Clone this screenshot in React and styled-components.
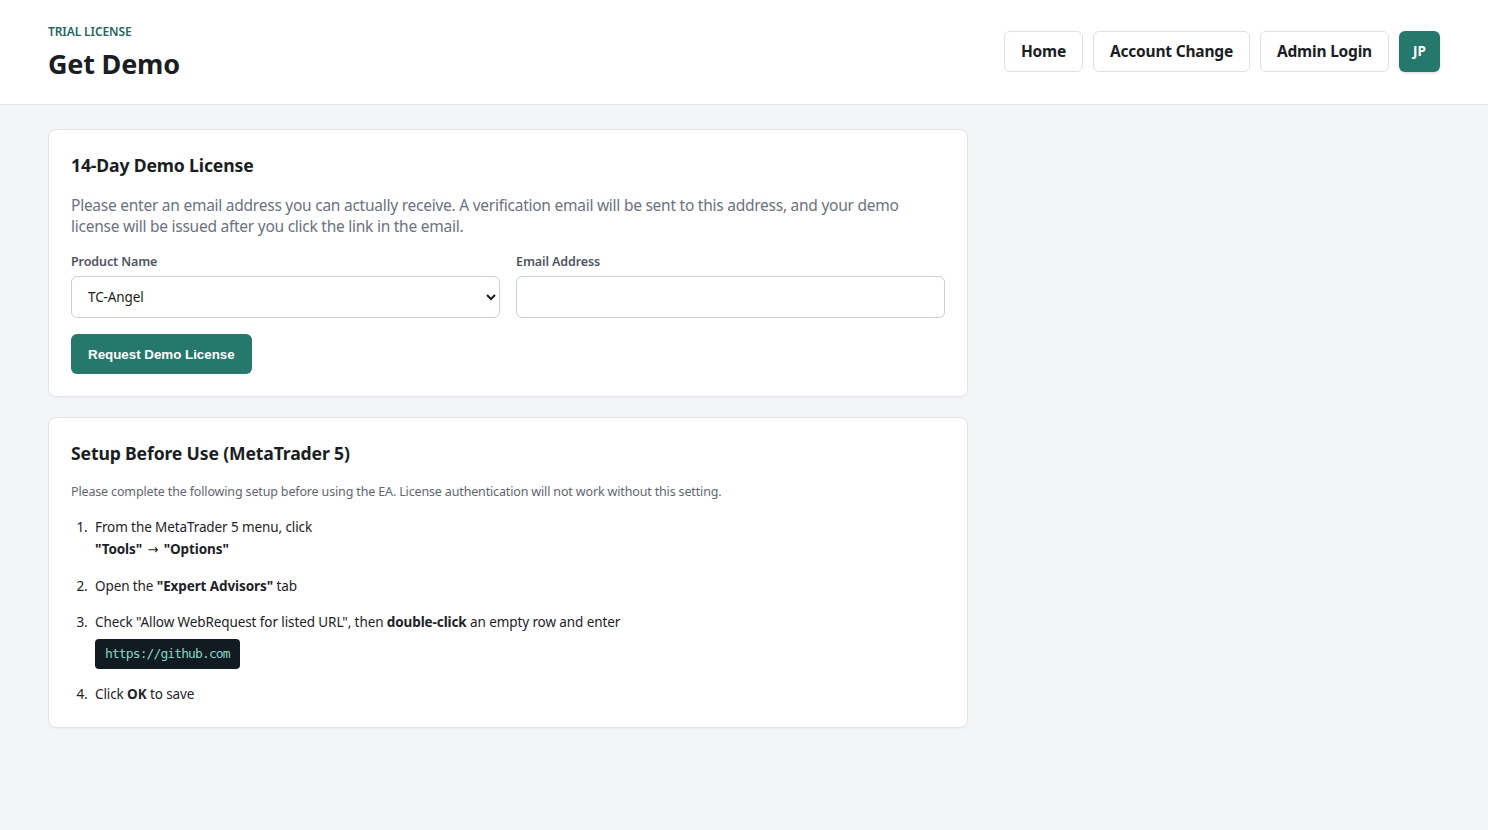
import React from "react";
import styled, { createGlobalStyle } from "styled-components";

const Global = createGlobalStyle`
  * { box-sizing: border-box; }
  html, body { margin: 0; padding: 0; }
  body {
    background: #f4f5f7;
    font-family: "Noto Sans", "Open Sans", sans-serif;
    color: #1c2024;
    min-height: 830px;
  }
`;

const Header = styled.header`
  height: 105px;
  background: #ffffff;
  border-bottom: 1px solid #e3e6ea;
  padding: 0 48px;
  display: flex;
  align-items: center;
  justify-content: space-between;
`;

const TitleBlock = styled.div`
  display: flex;
  flex-direction: column;
  gap: 6px;
  margin-top: 2px;
`;

const Eyebrow = styled.div`
  font-size: 12px;
  font-weight: 600;
  color: #22665f;
  letter-spacing: -0.1px;
  line-height: 16px;
`;

const PageTitle = styled.h1`
  margin: 0;
  font-size: 27px;
  font-weight: 700;
  line-height: 36px;
  color: #1a1e23;
  letter-spacing: -0.2px;
`;

const Nav = styled.nav`
  display: flex;
  align-items: center;
  gap: 10px;
  margin-top: -2px;
`;

const NavButton = styled.button`
  height: 41px;
  padding: 0 16px;
  background: #ffffff;
  border: 1px solid #dde1e6;
  border-radius: 6px;
  font-family: "Noto Sans", sans-serif;
  font-size: 15.5px;
  font-weight: 700;
  color: #1a1e23;
  letter-spacing: -0.2px;
  cursor: pointer;
`;

const Avatar = styled.div`
  width: 41px;
  height: 41px;
  border-radius: 6px;
  background: #26776c;
  color: #ffffff;
  font-size: 13.5px;
  font-weight: 700;
  display: flex;
  align-items: center;
  justify-content: center;
  box-shadow: 0 1px 3px rgba(0, 0, 0, 0.15);
`;

const Main = styled.main`
  padding: 24px 48px;
  display: flex;
  flex-direction: column;
  gap: 20px;
`;

const Card = styled.section`
  width: 920px;
  background: #ffffff;
  border: 1px solid #e1e4e8;
  border-radius: 8px;
  box-shadow: 0 1px 2px rgba(16, 24, 40, 0.04);
  padding: 22px 22px;
`;

const CardTitle = styled.h2`
  margin: 0 0 17px;
  font-size: 17.6px;
  font-weight: 700;
  line-height: 26px;
  color: #1a1e23;
  letter-spacing: -0.15px;
`;

const Lead = styled.p`
  margin: 0 0 16px;
  font-size: 15.5px;
  line-height: 21px;
  color: #6b7280;
  letter-spacing: -0.25px;
`;

const Note = styled.p`
  margin: 0 0 15px;
  font-size: 12.5px;
  line-height: 18px;
  color: #5f6670;
  letter-spacing: -0.15px;
`;

const FieldRow = styled.div`
  display: grid;
  grid-template-columns: 1fr 1fr;
  gap: 16px;
`;

const Field = styled.label`
  display: flex;
  flex-direction: column;
  gap: 6px;
`;

const Label = styled.span`
  font-size: 12.5px;
  font-weight: 600;
  line-height: 17px;
  color: #4d5562;
  letter-spacing: -0.1px;
`;

const Select = styled.select`
  height: 42px;
  padding: 0 10px 0 12px;
  border: 1px solid #c8d0d9;
  border-radius: 6px;
  background: #ffffff;
  font-family: "Noto Sans", sans-serif;
  font-size: 13.5px;
  color: #1a1e23;
  letter-spacing: -0.1px;
`;

const Input = styled.input`
  height: 42px;
  padding: 0 14px;
  border: 1px solid #c8d0d9;
  border-radius: 6px;
  background: #ffffff;
  font-family: "Noto Sans", sans-serif;
  font-size: 14px;
`;

const PrimaryButton = styled.button`
  margin-top: 16px;
  height: 40px;
  padding: 0 17px;
  border: none;
  border-radius: 6px;
  background: #26776c;
  color: #ffffff;
  font-family: "Liberation Sans", Arial, sans-serif;
  font-size: 13.333px;
  font-weight: 700;
  cursor: pointer;
`;

const Steps = styled.ol`
  margin: 0;
  padding-left: 20px;
  font-size: 13.5px;
  line-height: 22px;
  color: #1e2227;
  letter-spacing: -0.1px;
  & > li { margin-bottom: 14px; padding-left: 4px; }
  & > li:last-child { margin-bottom: 0; }
  & > li::marker { color: #1e2227; }
`;

const Arrow = styled.span`
  font-family: "DejaVu Sans", sans-serif;
  font-weight: 400;
  font-size: 13px;
  margin: 0 2px;
`;

const Code = styled.code`
  display: inline-block;
  margin-top: 6px;
  padding: 0 10px;
  height: 30px;
  line-height: 30px;
  background: #121a22;
  color: #86d6c6;
  border-radius: 4px;
  font-family: "DejaVu Sans Mono", "Liberation Mono", monospace;
  font-size: 13px;
  letter-spacing: -0.9px;
`;

export default function App() {
  return (
    <>
      <Global />
      <Header>
        <TitleBlock>
          <Eyebrow>TRIAL LICENSE</Eyebrow>
          <PageTitle>Get Demo</PageTitle>
        </TitleBlock>
        <Nav>
          <NavButton>Home</NavButton>
          <NavButton>Account Change</NavButton>
          <NavButton>Admin Login</NavButton>
          <Avatar>JP</Avatar>
        </Nav>
      </Header>
      <Main>
        <Card>
          <CardTitle>14-Day Demo License</CardTitle>
          <Lead>
            Please enter an email address you can actually receive. A verification email will be sent to this address, and your demo license will be issued after you click the link in the email.
          </Lead>
          <FieldRow>
            <Field>
              <Label>Product Name</Label>
              <Select defaultValue="TC-Angel">
                <option>TC-Angel</option>
              </Select>
            </Field>
            <Field>
              <Label>Email Address</Label>
              <Input type="email" />
            </Field>
          </FieldRow>
          <PrimaryButton>Request Demo License</PrimaryButton>
        </Card>
        <Card>
          <CardTitle>Setup Before Use (MetaTrader 5)</CardTitle>
          <Note>
            Please complete the following setup before using the EA. License authentication will not work without this setting.
          </Note>
          <Steps>
            <li>
              From the MetaTrader 5 menu, click
              <br />
              <b>"Tools" <Arrow>→</Arrow> "Options"</b>
            </li>
            <li>
              Open the <b>"Expert Advisors"</b> tab
            </li>
            <li>
              Check "Allow WebRequest for listed URL", then <b>double-click</b> an empty row and enter
              <br />
              <Code>https://github.com</Code>
            </li>
            <li>
              Click <b>OK</b> to save
            </li>
          </Steps>
        </Card>
      </Main>
    </>
  );
}
